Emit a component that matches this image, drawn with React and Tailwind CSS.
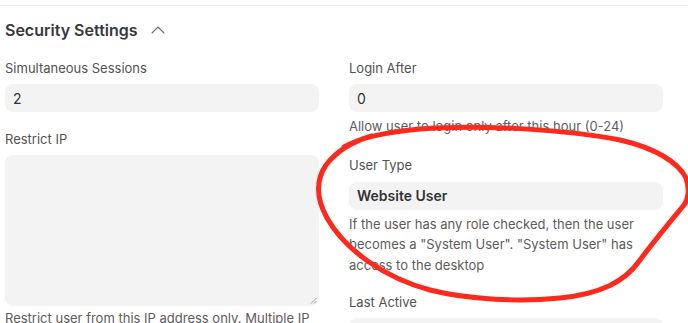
import { ChevronUp } from "lucide-react"

const Label = ({ children, className = "" }) => (
  <div className={`text-[13px] leading-4 text-[#525252] ${className}`}>{children}</div>
)

const Input = ({ value, bold }) => (
  <div
    className={`h-7 rounded-lg bg-[#f3f3f3] px-2 flex items-center text-[#333] ${
      bold ? "text-[14px] font-semibold" : "text-[14px]"
    }`}
  >
    {value}
  </div>
)

const Help = ({ children, className = "" }) => (
  <div className={`text-[13px] leading-[20.5px] text-[#5c5c5c] ${className}`}>{children}</div>
)

export default function App() {
  return (
    <div className="relative w-[688px] h-[323px] overflow-hidden bg-white font-['Inter',sans-serif]">
      <div className="h-[5px]" />
      <div className="border-t border-[#ececec]" />

      <div className="px-[5px] pt-3">
        {/* Section header */}
        <div className="flex items-center gap-2 h-6">
          <h2 className="text-[16px] font-semibold text-[#383838]">Security Settings</h2>
          <ChevronUp size={24} strokeWidth={1.1} className="text-[#6f6f6f]" />
        </div>

        <div className="grid grid-cols-[314px_314px] gap-x-[30px] mt-[18px]">
          {/* Left column */}
          <div className="flex flex-col">
            <Label className="mb-2">Simultaneous Sessions</Label>
            <Input value="2" />

            <Label className="mt-[19px] mb-2">Restrict IP</Label>
            <div className="relative h-[151px] rounded-lg bg-[#f3f3f3]">
              <svg className="absolute right-[2px] bottom-[2px]" width="7" height="7" viewBox="0 0 7 7">
                <path d="M1 6.5 L6.5 1 M4 6.5 L6.5 4" stroke="#888" strokeWidth="0.8" />
              </svg>
            </div>
            <Help className="mt-[2px]">Restrict user from this IP address only. Multiple IP</Help>
          </div>

          {/* Right column */}
          <div className="flex flex-col">
            <Label className="mb-2">Login After</Label>
            <Input value="0" />
            <Help className="mt-1">Allow user to login only after this hour (0-24)</Help>

            <Label className="mt-5 mb-[9px]">User Type</Label>
            <Input value="Website User" bold />
            <Help className="mt-1">
              If the user has any role checked, then the user becomes a "System User". "System User" has
              access to the desktop
            </Help>

            <Label className="mt-[19px] mb-2">Last Active</Label>
            <Input value="" />
          </div>
        </div>
      </div>

      {/* Hand-drawn annotation */}
      <svg className="absolute inset-0 pointer-events-none" width="688" height="323" viewBox="0 0 688 323">
        <path
          d="M 344 147 C 360 138, 380 133, 420 129 C 480 124, 570 130, 620 140 C 655 148, 678 162, 686 178 C 690 190, 688 200, 684 205 C 670 222, 655 240, 640 260 C 625 282, 600 294, 560 298 C 520 302, 470 300, 430 290 C 385 278, 345 250, 327 218 C 316 198, 316 180, 326 165 C 336 152, 350 142, 372 136"
          fill="none"
          stroke="#fb2a1c"
          strokeWidth="5"
          strokeLinecap="round"
          strokeLinejoin="round"
        />
      </svg>
    </div>
  )
}
